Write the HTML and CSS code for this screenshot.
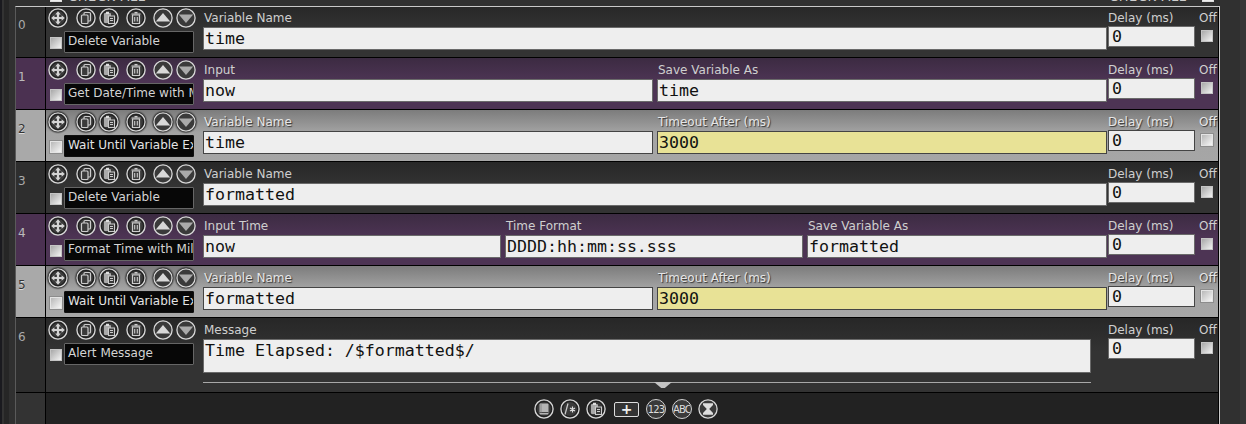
FILE: index.html
```html
<!DOCTYPE html>
<html>
<head>
<meta charset="utf-8">
<title>Actions</title>
<link rel="stylesheet" href="styles.css">
</head>
<body>
<svg class="defs" width="0" height="0">
  <defs>
    <g id="ring"><circle cx="10" cy="10" r="9.1" fill="#3a3a3a" stroke="#d8d8d8" stroke-width="1.3"/><circle cx="10" cy="10" r="7.5" fill="none" stroke="#1c1c1c" stroke-width="1"/></g>
    <symbol id="mv" viewBox="0 0 20 20"><use href="#ring"/><path d="M10 3.2l2.8 3.2h-1.7v2.5h2.5v-1.7l3.2 2.8-3.2 2.8v-1.7h-2.5v2.5h1.7l-2.8 3.2-2.8-3.2h1.7v-2.5h-2.5v1.7l-3.2-2.8 3.2-2.8v1.7h2.5v-2.5h-1.7z" fill="#d4d4d4"/></symbol>
    <symbol id="cp" viewBox="0 0 20 20"><use href="#ring"/><rect x="8" y="4.5" width="6.5" height="8.5" rx="1" fill="none" stroke="#ccc" stroke-width="1.2"/><rect x="5.5" y="7" width="6.5" height="8.5" rx="1" fill="#3a3a3a" stroke="#ccc" stroke-width="1.2"/></symbol>
    <symbol id="pa" viewBox="0 0 20 20"><use href="#ring"/><rect x="5" y="5" width="7" height="10" rx="1" fill="#aaa"/><rect x="7" y="3.8" width="3" height="2.2" fill="#ddd"/><rect x="9.5" y="8" width="6" height="7.5" fill="#3a3a3a" stroke="#ccc"/><path d="M11 10.5h3M11 12.5h3" stroke="#ccc"/></symbol>
    <symbol id="tr" viewBox="0 0 20 20"><use href="#ring"/><path d="M6.5 7h7v8.5h-7z" fill="none" stroke="#ccc" stroke-width="1.2"/><path d="M5.5 6h9M8.5 4.6h3M8.7 9v4.5M11.3 9v4.5" stroke="#ccc" stroke-width="1.1"/></symbol>
    <symbol id="up" viewBox="0 0 20 20"><circle cx="10" cy="10" r="9.1" fill="#3a3a3a" stroke="#d8d8d8" stroke-width="1.3"/><path d="M2.8 13.6L10 5l7.2 8.6z" fill="#d8d8d8"/></symbol>
    <symbol id="dn" viewBox="0 0 20 20"><circle cx="10" cy="10" r="9.1" fill="#3a3a3a" stroke="#d8d8d8" stroke-width="1.3"/><path d="M2.8 6.6h14.4L10 15z" fill="#aaa"/></symbol>
    <symbol id="bk" viewBox="0 0 20 20"><use href="#ring"/><rect x="5.5" y="4.5" width="9" height="11" rx="1" fill="#b4b4b4"/><path d="M5.5 13.5h9" stroke="#444"/><path d="M7 4.5v9" stroke="#888"/></symbol>
    <symbol id="cm" viewBox="0 0 20 20"><use href="#ring"/><path d="M8 4.5L5 15.5" stroke="#ccc" stroke-width="1.2"/><path d="M12.5 7.5v6M10 9l5 3M15 9l-5 3" stroke="#ddd" stroke-width="1.2"/></symbol>
    <symbol id="hg" viewBox="0 0 20 20"><circle cx="10" cy="10" r="9.1" fill="#3a3a3a" stroke="#d8d8d8" stroke-width="1.3"/><path d="M5 4.2h10v1.8l-3.8 4 3.8 4v1.8H5V14l3.8-4L5 6z" fill="#ddd"/></symbol>
  </defs>
</svg>

<div class="topstrip">
  <span class="chk chk-a"></span><span class="allt">CHECK ALL</span>
  <span class="allt allt-r">CHECK ALL</span><span class="chk chk-b"></span>
</div>

<main class="panel">
  <div class="list">

    <section class="row dark">
      <div class="num">0</div>
      <div class="ctl">
        <div class="icons"><svg class="ic"><use href="#mv"/></svg><svg class="ic sp1"><use href="#cp"/></svg><svg class="ic"><use href="#pa"/></svg><svg class="ic sp"><use href="#tr"/></svg><svg class="ic sp"><use href="#up"/></svg><svg class="ic"><use href="#dn"/></svg></div>
        <div class="namebar"><span class="chk"></span><div class="name">Delete Variable</div></div>
      </div>
      <div class="fields">
        <div class="field"><label class="lab">Variable Name</label><div class="inp">time</div></div>
      </div>
      <div class="delay"><label class="lab">Delay (ms)</label><div class="inp small">0</div></div>
      <div class="off"><label class="lab">Off</label><span class="chk"></span></div>
    </section>

    <section class="row purple">
      <div class="num">1</div>
      <div class="ctl">
        <div class="icons"><svg class="ic"><use href="#mv"/></svg><svg class="ic sp1"><use href="#cp"/></svg><svg class="ic"><use href="#pa"/></svg><svg class="ic sp"><use href="#tr"/></svg><svg class="ic sp"><use href="#up"/></svg><svg class="ic"><use href="#dn"/></svg></div>
        <div class="namebar"><span class="chk"></span><div class="name">Get Date/Time with Milliseconds</div></div>
      </div>
      <div class="fields">
        <div class="field"><label class="lab">Input</label><div class="inp">now</div></div>
        <div class="field"><label class="lab">Save Variable As</label><div class="inp">time</div></div>
      </div>
      <div class="delay"><label class="lab">Delay (ms)</label><div class="inp small">0</div></div>
      <div class="off"><label class="lab">Off</label><span class="chk"></span></div>
    </section>

    <section class="row gray">
      <div class="num">2</div>
      <div class="ctl">
        <div class="icons"><svg class="ic"><use href="#mv"/></svg><svg class="ic sp1"><use href="#cp"/></svg><svg class="ic"><use href="#pa"/></svg><svg class="ic sp"><use href="#tr"/></svg><svg class="ic sp"><use href="#up"/></svg><svg class="ic"><use href="#dn"/></svg></div>
        <div class="namebar"><span class="chk"></span><div class="name">Wait Until Variable Exists</div></div>
      </div>
      <div class="fields">
        <div class="field"><label class="lab">Variable Name</label><div class="inp">time</div></div>
        <div class="field"><label class="lab">Timeout After (ms)</label><div class="inp yellow">3000</div></div>
      </div>
      <div class="delay"><label class="lab">Delay (ms)</label><div class="inp small">0</div></div>
      <div class="off"><label class="lab">Off</label><span class="chk"></span></div>
    </section>

    <section class="row dark">
      <div class="num">3</div>
      <div class="ctl">
        <div class="icons"><svg class="ic"><use href="#mv"/></svg><svg class="ic sp1"><use href="#cp"/></svg><svg class="ic"><use href="#pa"/></svg><svg class="ic sp"><use href="#tr"/></svg><svg class="ic sp"><use href="#up"/></svg><svg class="ic"><use href="#dn"/></svg></div>
        <div class="namebar"><span class="chk"></span><div class="name">Delete Variable</div></div>
      </div>
      <div class="fields">
        <div class="field"><label class="lab">Variable Name</label><div class="inp">formatted</div></div>
      </div>
      <div class="delay"><label class="lab">Delay (ms)</label><div class="inp small">0</div></div>
      <div class="off"><label class="lab">Off</label><span class="chk"></span></div>
    </section>

    <section class="row purple">
      <div class="num">4</div>
      <div class="ctl">
        <div class="icons"><svg class="ic"><use href="#mv"/></svg><svg class="ic sp1"><use href="#cp"/></svg><svg class="ic"><use href="#pa"/></svg><svg class="ic sp"><use href="#tr"/></svg><svg class="ic sp"><use href="#up"/></svg><svg class="ic"><use href="#dn"/></svg></div>
        <div class="namebar"><span class="chk"></span><div class="name">Format Time with Milliseconds</div></div>
      </div>
      <div class="fields tri">
        <div class="field"><label class="lab">Input Time</label><div class="inp">now</div></div>
        <div class="field"><label class="lab">Time Format</label><div class="inp">DDDD:hh:mm:ss.sss</div></div>
        <div class="field"><label class="lab">Save Variable As</label><div class="inp">formatted</div></div>
      </div>
      <div class="delay"><label class="lab">Delay (ms)</label><div class="inp small">0</div></div>
      <div class="off"><label class="lab">Off</label><span class="chk"></span></div>
    </section>

    <section class="row gray">
      <div class="num">5</div>
      <div class="ctl">
        <div class="icons"><svg class="ic"><use href="#mv"/></svg><svg class="ic sp1"><use href="#cp"/></svg><svg class="ic"><use href="#pa"/></svg><svg class="ic sp"><use href="#tr"/></svg><svg class="ic sp"><use href="#up"/></svg><svg class="ic"><use href="#dn"/></svg></div>
        <div class="namebar"><span class="chk"></span><div class="name">Wait Until Variable Exists</div></div>
      </div>
      <div class="fields">
        <div class="field"><label class="lab">Variable Name</label><div class="inp">formatted</div></div>
        <div class="field"><label class="lab">Timeout After (ms)</label><div class="inp yellow">3000</div></div>
      </div>
      <div class="delay"><label class="lab">Delay (ms)</label><div class="inp small">0</div></div>
      <div class="off"><label class="lab">Off</label><span class="chk"></span></div>
    </section>

    <section class="row dark last">
      <div class="num">6</div>
      <div class="ctl">
        <div class="icons"><svg class="ic"><use href="#mv"/></svg><svg class="ic sp1"><use href="#cp"/></svg><svg class="ic"><use href="#pa"/></svg><svg class="ic sp"><use href="#tr"/></svg><svg class="ic sp"><use href="#up"/></svg><svg class="ic"><use href="#dn"/></svg></div>
        <div class="namebar"><span class="chk"></span><div class="name">Alert Message</div></div>
      </div>
      <div class="fields msgwrap">
        <div class="field"><label class="lab">Message</label><div class="inp msg">Time Elapsed: /$formatted$/</div>
          <div class="rule"><span class="notch"></span></div>
        </div>
      </div>
      <div class="delay"><label class="lab">Delay (ms)</label><div class="inp small">0</div></div>
      <div class="off"><label class="lab">Off</label><span class="chk"></span></div>
    </section>

    <footer class="foot">
      <div class="num"></div>
      <div class="tools">
        <svg class="ic"><use href="#bk"/></svg>
        <svg class="ic"><use href="#cm"/></svg>
        <svg class="ic"><use href="#pa"/></svg>
        <div class="plus">+</div>
        <div class="tbtn"><span class="tt">123</span></div>
        <div class="tbtn"><span class="tt">ABC</span></div>
        <svg class="ic"><use href="#hg"/></svg>
      </div>
    </footer>

  </div>
</main>
</body>
</html>
```
FILE: styles.css
```css
* { box-sizing: border-box; }
html, body { margin: 0; height: 424px; overflow: hidden; }
body {
  width: 1246px;
  font-family: "DejaVu Sans", sans-serif;
  font-size: 12px;
  color: #d0d0d0;
  background: linear-gradient(90deg, #1a1a1f 0, #1a1a1f 2px, #333 2px, #333 4px, #262626 4px, #262626 9px, #303030 9px, #303030 1240px, #363636 1240px);
}
.defs { position: absolute; }

.topstrip {
  height: 6px;
  overflow: hidden;
  display: flex;
  align-items: flex-start;
  padding: 0 32px 0 50px;
}
.topstrip .chk { margin: -10px 0 0; border-color: #ddd; background: #eee; }
.chk-a { flex: none; }
.topstrip .chk-b { margin-left: 4px; }
.allt {
  margin: -10px 0 0 6px;
  width: 89px;
  font-size: 13px;
  line-height: 14px;
  letter-spacing: 0.6px;
  color: #ccc;
  white-space: nowrap;
}
.allt-r { margin-left: auto; }

.panel {
  margin-left: 15px;
  width: 1205px;
  height: 418px;
  border-top: 1px solid #c8c8c8;
  border-left: 1px solid #5a5a5a;
  border-right: 1px solid #c8c8c8;
  overflow: hidden;
}
.list {
  margin-top: -1px;
  border-right: 1px solid #000;
  height: 420px;
}

.row {
  display: flex;
  height: 52px;
  border-bottom: 1px solid #000;
}
.row.last { height: 75px; }
.dark { background: linear-gradient(#272727, #333 45%, #333); }
.purple { background: linear-gradient(#3c2b42, #4d3454 45%, #4d3454); }
.gray { background: linear-gradient(#7c7c7c, #a4a4a4 45%, #a6a6a6); }

.num {
  flex: none;
  width: 30px;
  border-right: 1px solid #000;
  padding: 12px 0 0 2px;
  line-height: 14px;
  color: #aaa;
}
.dark .num { background: #2e2e2e; }
.purple .num { background: #4b3151; color: #bbb; }
.gray .num { background: #a9a9a9; color: #333; text-shadow: 0 1px 0 #ddd; }

.ctl {
  flex: none;
  width: 157px;
  padding: 2px 0 0 2px;
}
.icons { display: flex; gap: 3px; height: 20px; }
.ic { flex: none; width: 20px; height: 20px; display: block; }
.sp1 { margin-left: 5px; }
.sp { margin-left: 4px; }
.gray .ic { filter: drop-shadow(0 0 1px #000) drop-shadow(0 0 0.5px #000); }

.namebar { display: flex; align-items: flex-start; margin-top: 3px; }
.chk {
  flex: none;
  display: block;
  width: 12px;
  height: 12px;
  border: 1px solid #c4c4c4;
  background: linear-gradient(135deg, #a8a8a8, #f2f2f2);
}
.gray .chk { border-color: #e4e4e4; background: linear-gradient(135deg, #b8b8b8, #f6f6f6); box-shadow: 0 0 0 1px #8c8c8c; }
.namebar .chk { margin: 6px 2px 0 2px; }
.name {
  width: 130px;
  height: 22px;
  background: #070707;
  border: 1px solid #666;
  border-radius: 1px;
  padding-left: 3px;
  line-height: 19px;
  color: #d4d4d4;
  white-space: nowrap;
  overflow: hidden;
}
.gray .name { border-color: #111; color: #e4e4e4; }

.fields {
  flex: none;
  width: 904px;
  display: flex;
  gap: 4px;
}
.field { flex: 1; min-width: 0; }
.tri .field:nth-child(-n+2) { flex: 0 0 298px; }
.lab {
  display: block;
  padding: 5px 0 0 1px;
  height: 21px;
  line-height: 14px;
  color: #cfcfcf;
  white-space: nowrap;
}
.gray .lab { color: #e6e6e6; text-shadow: 1px 1px 1px #333; }

.inp {
  height: 23px;
  background: #eee;
  border: 1px solid #6a6a6a;
  padding-left: 1px;
  font-family: "DejaVu Sans Mono", monospace;
  font-size: 16.6px;
  line-height: 21px;
  color: #111;
  white-space: pre;
  overflow: hidden;
}
.gray .inp { border-color: #444; }
.yellow { background: #e8e296; }
.msgwrap { padding-right: 16px; }
.msg { height: 34px; }
.rule { position: relative; height: 1px; margin-top: 9px; background: #a8a8a8; }
.notch {
  position: absolute;
  left: 451px;
  top: 0;
  width: 18px;
  height: 6px;
  background: #c4c4c4;
  clip-path: polygon(0 0, 100% 0, 60% 100%, 40% 100%);
}

.delay { flex: none; width: 91px; margin-left: 1px; }
.delay .lab { height: 20px; padding-left: 0; }
.small { width: 87px; height: 21px; line-height: 19px; padding-left: 3px; }
.off { flex: none; width: 20px; }
.off .lab { height: 24px; padding-left: 0; }
.off .chk { margin-left: 2px; }

.foot {
  display: flex;
  height: 32px;
  background: #222;
}
.foot .num { background: #333; }
.tools {
  flex: 1;
  display: flex;
  align-items: center;
  padding: 0 0 0 488px;
  gap: 6px;
}
.plus {
  width: 25px;
  height: 15px;
  margin: 0 1px 0 2px;
  border: 1px solid #ddd;
  border-radius: 2px;
  background: #333;
  color: #eee;
  font-weight: bold;
  font-size: 14px;
  line-height: 13px;
  text-align: center;
}
.tbtn {
  flex: none;
  width: 20px;
  height: 20px;
  border: 1px solid #d0d0d0;
  border-radius: 50%;
  background: #3a3a3a;
  display: flex;
  align-items: center;
  justify-content: center;
  overflow: hidden;
}
.tt { font-size: 10px; letter-spacing: -0.9px; color: #ddd; }
```
